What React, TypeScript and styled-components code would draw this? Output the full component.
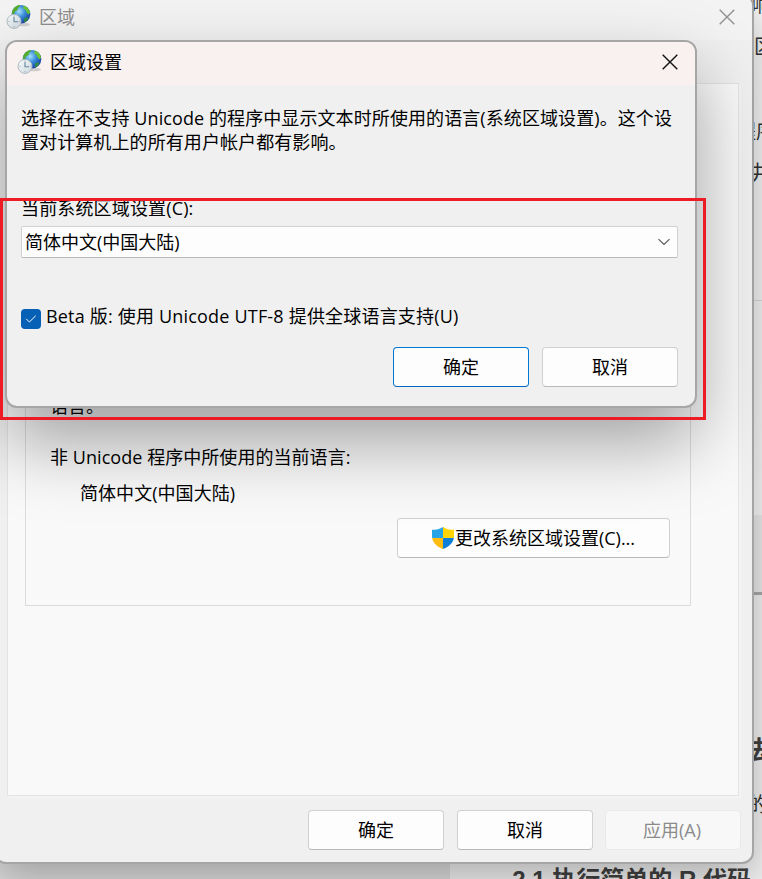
import React from "react";
import styled, { createGlobalStyle } from "styled-components";

const GlobalStyle = createGlobalStyle`
  * { box-sizing: border-box; }
  body { margin: 0; overflow: hidden; }
`;

const uiFont = `"Open Sans", "Noto Sans CJK SC", sans-serif`;

const Desktop = styled.div`
  position: relative;
  width: 762px;
  height: 879px;
  overflow: hidden;
  background: #f0f0f0;
  font: 400 18px/24px ${uiFont};
  color: #000;
`;

const Backdrop = styled.div`
  display: grid;
  grid-template-columns: 450px 1fr;
  height: 100%;
`;
const Rail = styled.div`
  background: #dedede;
`;
const Article = styled.div`
  display: flex;
  flex-direction: column;
  align-items: flex-end;
  overflow: hidden;
  background: #f2f2f2;
  font-family: "Liberation Sans", "Noto Sans CJK SC", sans-serif;
`;
const Band = styled.div<{ $h: number; $bg: string; $rule?: string }>`
  width: 100%;
  height: ${(p) => p.$h}px;
  flex: none;
  background: ${(p) => p.$bg};
  border-bottom: ${(p) => p.$rule ?? "0"};
  display: flex;
  flex-direction: column;
  align-items: flex-end;
  overflow: hidden;
`;
const Snippet = styled.div<{ $gap: number; $size: number; $bold?: boolean; $shift?: number }>`
  flex: none;
  margin-top: ${(p) => p.$gap}px;
  margin-right: ${(p) => p.$shift ?? 0}px;
  font-size: ${(p) => p.$size}px;
  line-height: 26px;
  font-weight: ${(p) => (p.$bold ? 700 : 400)};
  color: ${(p) => (p.$bold ? "#414141" : "#333")};
  white-space: nowrap;
`;

const ParentWindow = styled.section`
  position: absolute;
  left: -6px;
  top: -6px;
  width: 760px;
  height: 870px;
  display: flex;
  flex-direction: column;
  border: 2px solid #a5a5a5;
  border-radius: 12px;
  background: #f0f0f0;
  background-clip: padding-box;
  box-shadow: 0 16px 44px rgba(0, 0, 0, 0.28);
`;
const ParentTitle = styled.header`
  display: flex;
  align-items: center;
  height: 44px;
  padding: 0 17px 2px 10px;
  gap: 8px;
  background: #f3f3f3;
  color: #8e8e8e;
  border-radius: 10px 10px 0 0;
  > span { flex: 1; }
`;
const TabPage = styled.div`
  margin: 43px 13px 0 11px;
  height: 713px;
  padding: 0 47px 0 17px;
  background: #f9f9f9;
  border: 1px solid #e3e3e3;
  box-shadow: 2px 2px 0 #f4f4f4;
`;
const GroupBox = styled.div`
  display: flex;
  flex-direction: column;
  height: 522px;
  padding: 310px 20px 0 24px;
  border: 1px solid #dcdcdc;
  border-top: 0;
`;
const GroupText = styled.div<{ $gap?: number; $indent?: number }>`
  margin-top: ${(p) => p.$gap ?? 0}px;
  margin-left: ${(p) => p.$indent ?? 0}px;
  letter-spacing: 0.05px;
  white-space: nowrap;
`;
const Button = styled.button<{ $primary?: boolean; $wide?: boolean }>`
  display: flex;
  align-items: center;
  justify-content: center;
  width: ${(p) => (p.$wide ? 273 : 136)}px;
  height: 40px;
  flex: none;
  padding: 0;
  border: 1px solid ${(p) => (p.$primary ? "#0078d4" : "#d0d0d0")};
  border-bottom-color: ${(p) => (p.$primary ? "#0067c0" : "#b9b9b9")};
  border-radius: 4px;
  background: #fdfdfd;
  color: #000;
  font: 400 18px/24px ${uiFont};
  white-space: nowrap;
  &:disabled {
    margin-left: -1px;
    padding-right: 2px;
    border-color: #e9e9e9;
    background: #f8f8f8;
    color: #8b8b8b;
  }
`;
const ShieldButton = styled(Button)`
  align-self: flex-end;
  margin-top: 13px;
  padding-right: 1px;
`;
const Footer = styled.footer`
  display: flex;
  justify-content: flex-end;
  gap: 13px;
  padding: 14px 11px 0 0;
`;

const Dialog = styled.section`
  position: absolute;
  left: 5px;
  top: 40px;
  width: 692px;
  height: 368px;
  border: 2px solid #a6a6a6;
  border-radius: 12px;
  background: #f0f0f0;
  box-shadow: 0 34px 72px rgba(0, 0, 0, 0.36);
`;
const DialogTitle = styled.header`
  display: flex;
  align-items: center;
  height: 43px;
  padding: 0 17px 3px 10px;
  gap: 8px;
  border-radius: 10px 10px 0 0;
  background: #f9f0f0;
  > span { flex: 1; }
`;
const DialogBody = styled.div`
  padding: 21px 17px 0 14px;
`;
const Description = styled.p`
  margin: 0;
  letter-spacing: 0.09px;
  white-space: nowrap;
`;
const Label = styled.div`
  margin-top: 42px;
  letter-spacing: 0.15px;
`;
const Select = styled.div`
  display: flex;
  align-items: center;
  justify-content: space-between;
  height: 32px;
  margin-top: 6px;
  padding: 0 6px 0 3px;
  border: 1px solid #d0d0d0;
  border-bottom-color: #b9b9b9;
  border-radius: 2px;
  background: #fdfdfd;
`;
const CheckRow = styled.div`
  display: flex;
  align-items: center;
  gap: 5px;
  height: 24px;
  margin-top: 46px;
  letter-spacing: 0.19px;
  white-space: nowrap;
`;
const CheckBox = styled.span`
  display: grid;
  place-items: center;
  width: 20px;
  height: 20px;
  margin-top: 5px;
  border-radius: 4px;
  background: #0560b6;
`;
const DialogButtons = styled.div`
  display: flex;
  justify-content: flex-end;
  gap: 13px;
  margin-top: 19px;
`;
const Marker = styled.div`
  position: absolute;
  left: 0;
  top: 198px;
  width: 706px;
  height: 222px;
  border: 3px solid #ed1c24;
`;

function GlobeClock({ id }: { id: string }) {
  return (
    <svg width="25" height="26" viewBox="0 0 25 26">
      <defs>
        <radialGradient id={id + "g"} cx=".4" cy=".35" r=".7">
          <stop offset="0" stopColor="#a6e2fa" />
          <stop offset=".45" stopColor="#3b8edb" />
          <stop offset="1" stopColor="#17389f" />
        </radialGradient>
        <linearGradient id={id + "c"} x1="0" y1="0" x2="1" y2="1">
          <stop offset="0" stopColor="#f8fbfc" />
          <stop offset="1" stopColor="#ccd7de" />
        </linearGradient>
      </defs>
      <ellipse cx="17" cy="20.5" rx="7" ry="1.8" fill="#999" opacity=".4" />
      <circle cx="15" cy="10.2" r="9.3" fill={`url(#${id}g)`} />
      <path d="M5.900 10C6 5 9.500 1.500 13.500 1l1 1-2.500 1.800-.6 2.400-2.600 1.400-.6 2.200z" fill="#55ad2b" />
      <path d="M17.500 1.500c3.500 1 6 4 6.600 7.200l-1.600 1.800-1.800-2-1.200-2.700-2.200-1z" fill="#6cc435" />
      <path d="M18 14.500l3.200-1.300 1.300 1c-1 1.900-2.400 3.300-4.300 4.200z" fill="#2f8d42" />
      <circle cx="8" cy="17.400" r="7" fill={`url(#${id}c)`} stroke="#b0babf" strokeWidth="1" />
      <path d="M8 12.700v5h4" fill="none" stroke="#6887a0" strokeWidth="1.1" />
      <path d="M8 11.500v.8M8 22.200v.9M2.500 17.400h.9M12.800 17.400h.9" stroke="#7e98a8" strokeWidth=".9" />
    </svg>
  );
}

function Close({ color }: { color: string }) {
  return (
    <svg width="16" height="16" viewBox="0 0 16 16">
      <path d="M.7.7l14.600 14.600M15.300.7L.7 15.300" stroke={color} strokeWidth="1.4" fill="none" />
    </svg>
  );
}

function Shield() {
  return (
    <svg width="24" height="24" viewBox="0 0 24 24">
      <defs>
        <clipPath id="shield">
          <path d="M12 1c3.200 2 6.500 2.800 11 2.800V10c0 6-4 10.300-11 13C5 20.300 1 16 1 10V3.800C5.500 3.800 8.800 3 12 1z" />
        </clipPath>
      </defs>
      <g clipPath="url(#shield)">
        <path d="M0 0h12v12H0z" fill="#25a4e8" />
        <path d="M12 0h12v12H12z" fill="#ffd400" />
        <path d="M0 12h12v12H0z" fill="#fdbc12" />
        <path d="M12 12h12v12H12z" fill="#0d7fd8" />
      </g>
    </svg>
  );
}

export default function App() {
  return (
    <Desktop>
      <GlobalStyle />
      <Backdrop>
        <Rail />
        <Article>
          <Band $h={301} $bg="#f8f8f8" $rule="1px solid #dcdcdc">
            <Snippet $gap={-7} $size={18} $shift={-8}>响</Snippet>
            <Snippet $gap={15} $size={20} $shift={-12}>区</Snippet>
            <Snippet $gap={59} $size={20} $shift={-14}>程序</Snippet>
            <Snippet $gap={15} $size={20} $shift={-9}>井</Snippet>
          </Band>
          <Band $h={214} $bg="#f8f8f8" />
          <Band $h={80} $bg="#ebebeb" $rule="3px solid #a9a9a9" />
          <Snippet $gap={142} $size={25} $bold $shift={-6}>方法</Snippet>
          <Snippet $gap={29} $size={20} $shift={-6}>的</Snippet>
          <Snippet $gap={49} $size={24} $bold $shift={11}>2.1 执行简单的 R 代码</Snippet>
        </Article>
      </Backdrop>

      <ParentWindow>
        <ParentTitle>
          <GlobeClock id="parent" />
          <span>区域</span>
          <Close color="#929292" />
        </ParentTitle>
        <TabPage>
          <GroupBox>
            <GroupText>语言。</GroupText>
            <GroupText $gap={27}>非 Unicode 程序中所使用的当前语言:</GroupText>
            <GroupText $gap={12} $indent={30}>简体中文(中国大陆)</GroupText>
            <ShieldButton $wide>
              <Shield />
              更改系统区域设置(C)...
            </ShieldButton>
          </GroupBox>
        </TabPage>
        <Footer>
          <Button>确定</Button>
          <Button>取消</Button>
          <Button disabled>应用(A)</Button>
        </Footer>
      </ParentWindow>

      <Dialog>
        <DialogTitle>
          <GlobeClock id="dialog" />
          <span>区域设置</span>
          <Close color="#111" />
        </DialogTitle>
        <DialogBody>
          <Description>
            选择在不支持 Unicode 的程序中显示文本时所使用的语言(系统区域设置)。这个设
            <br />
            置对计算机上的所有用户帐户都有影响。
          </Description>
          <Label>当前系统区域设置(C):</Label>
          <Select>
            简体中文(中国大陆)
            <svg width="14" height="8" viewBox="0 0 14 8">
              <path d="M1.500 1.200L7 6.500l5.500-5.300" fill="none" stroke="#555" strokeWidth="1.100" />
            </svg>
          </Select>
          <CheckRow>
            <CheckBox>
              <svg width="12" height="10" viewBox="0 0 12 10">
                <path d="M1.200 4.800l3.200 3.200 6.300-6.200" fill="none" stroke="#fff" strokeWidth="1" />
              </svg>
            </CheckBox>
            Beta 版: 使用 Unicode UTF-8 提供全球语言支持(U)
          </CheckRow>
          <DialogButtons>
            <Button $primary>确定</Button>
            <Button>取消</Button>
          </DialogButtons>
        </DialogBody>
      </Dialog>
      <Marker />
    </Desktop>
  );
}
